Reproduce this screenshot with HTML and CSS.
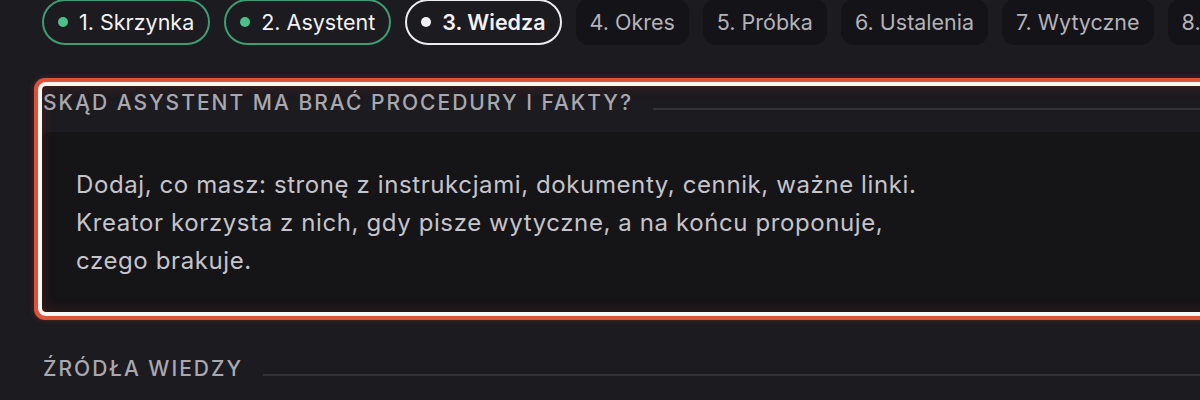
FILE: index.html
```html
<!DOCTYPE html>
<html lang="pl">
<head>
<meta charset="utf-8">
<title>Kreator</title>
<link rel="stylesheet" href="styles.css">
</head>
<body>
<div class="page">
  <nav class="steps">
    <div class="step done"><span class="dot"></span>1. Skrzynka</div>
    <div class="step done"><span class="dot"></span>2. Asystent</div>
    <div class="step current"><span class="dot"></span>3. Wiedza</div>
    <div class="step">4. Okres</div>
    <div class="step">5. Próbka</div>
    <div class="step">6. Ustalenia</div>
    <div class="step">7. Wytyczne</div>
    <div class="step">8. Podsumowanie</div>
  </nav>

  <section class="block highlighted">
    <h2 class="heading"><span class="heading-text">Skąd asystent ma brać procedury i fakty?</span><span class="rule"></span></h2>
    <div class="card">
      <p class="card-text">Dodaj, co masz: stronę z instrukcjami, dokumenty, cennik, ważne linki.<br>Kreator korzysta z nich, gdy pisze wytyczne, a na końcu proponuje,<br>czego brakuje.</p>
    </div>
  </section>

  <section class="block">
    <h2 class="heading"><span class="heading-text">Źródła wiedzy</span><span class="rule"></span></h2>
  </section>
</div>
</body>
</html>
```
FILE: styles.css
```css
html, body {
  margin: 0;
  padding: 0;
}
body {
  background: #1c1b20;
  font-family: Inter, "Noto Sans", "DejaVu Sans", sans-serif;
  overflow: hidden;
  width: 1200px;
  height: 400px;
}
.page {
  padding-left: 42px;
  width: 1500px;
}
.steps {
  display: flex;
  flex-wrap: nowrap;
  gap: 14px;
  margin-top: -1px;
}
.step {
  box-sizing: border-box;
  height: 46px;
  display: flex;
  align-items: center;
  gap: 11px;
  padding: 0 14px;
  border-radius: 13px;
  background: #141317;
  color: #b3b2b9;
  font-size: 21.5px;
  white-space: nowrap;
}
.step.done,
.step.current {
  background: transparent;
  border-radius: 23px;
  color: #f2f2f4;
}
.step.done {
  border: 2px solid #3f9c73;
}
.step.current {
  border: 2px solid #ededf0;
  font-weight: 600;
}
.dot {
  width: 10px;
  height: 10px;
  border-radius: 50%;
  background: #4cc08a;
}
.step.current .dot {
  background: #f2f2f4;
}
.block {
  position: relative;
  margin-top: 41px;
}
.block + .block {
  margin-top: 40px;
}
.highlighted {
  box-shadow: 0 0 0 4px #fbf5f3, 0 0 0 8px #e0513a, 0 0 6px 8px rgba(224, 81, 58, 0.25);
  border-radius: 4px;
}
.highlighted::after {
  content: "";
  position: absolute;
  inset: 0;
  border-radius: 4px;
  box-shadow: inset 0 0 14px rgba(200, 60, 40, 0.22);
  pointer-events: none;
}
.heading {
  display: flex;
  align-items: flex-start;
  margin: 0;
  padding-top: 5px;
  height: 41px;
  box-sizing: content-box;
  font-size: 21px;
  line-height: 24px;
  font-weight: 500;
  letter-spacing: 2px;
  text-transform: uppercase;
  color: #a9a8af;
}
.heading-text {
  margin-left: 1px;
  white-space: nowrap;
}
.rule {
  flex: 1;
  height: 2px;
  margin-top: 17px;
  margin-left: 20px;
  background: #333238;
}
.card {
  background: #151417;
  border-radius: 8px;
  padding: 34px 34px 32px;
}
.card-text {
  margin: 0;
  font-size: 24px;
  letter-spacing: 0.6px;
  line-height: 38px;
  color: #c5c4cb;
}
```
